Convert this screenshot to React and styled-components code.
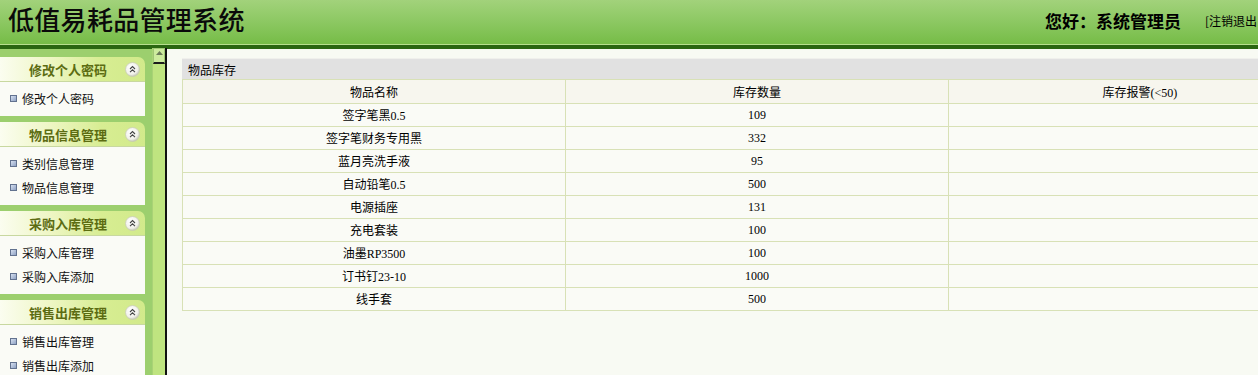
import styled, { createGlobalStyle } from 'styled-components';

const GlobalStyle = createGlobalStyle`
    html, body {
        margin: 0;
        padding: 0;
        background: #f8faf3;
        overflow: hidden;
    }
    body {
        font-family: "Liberation Serif", "Noto Sans CJK SC", serif;
        font-size: 12px;
        color: #000;
    }
`;

const menus = [
    { title: '修改个人密码', items: ['修改个人密码'] },
    { title: '物品信息管理', items: ['类别信息管理', '物品信息管理'] },
    { title: '采购入库管理', items: ['采购入库管理', '采购入库添加'] },
    { title: '销售出库管理', items: ['销售出库管理', '销售出库添加'] },
];

const stock = [
    ['签字笔黑0.5', '109'],
    ['签字笔财务专用黑', '332'],
    ['蓝月亮洗手液', '95'],
    ['自动铅笔0.5', '500'],
    ['电源插座', '131'],
    ['充电套装', '100'],
    ['油墨RP3500', '100'],
    ['订书钉23-10', '1000'],
    ['线手套', '500'],
];

const CollapseIcon = () => (
    <svg width="15" height="15" viewBox="0 0 15 15">
        <defs>
            <radialGradient id="cg" cx="40%" cy="35%" r="70%">
                <stop offset="0%" stopColor="#ffffff" />
                <stop offset="70%" stopColor="#f1f1ea" />
                <stop offset="100%" stopColor="#b9bca8" />
            </radialGradient>
        </defs>
        <circle cx="7.5" cy="7.5" r="7" fill="url(#cg)" stroke="#c9cdb4" strokeWidth="0.8" />
        <path d="M5 7 L7.5 4.6 L10 7 M5 10.2 L7.5 7.8 L10 10.2" fill="none" stroke="#444" strokeWidth="1.1" />
    </svg>
);

const App = () => {
    return (
        <>
            <GlobalStyle />
            <Page>
                <Header>
                    <Title>低值易耗品管理系统</Title>
                    <UserBox>
                        <Greeting>您好：系统管理员</Greeting>
                        <Logout>[注销退出</Logout>
                    </UserBox>
                </Header>
                <Body>
                    <Sidebar>
                        <Menu>
                            {menus.map((m) => (
                                <Section key={m.title}>
                                    <SectionHead>
                                        <SectionTitle>{m.title}</SectionTitle>
                                        <IconSlot>
                                            <CollapseIcon />
                                        </IconSlot>
                                    </SectionHead>
                                    <ItemList>
                                        {m.items.map((it) => (
                                            <Item key={it}>
                                                <Bullet />
                                                {it}
                                            </Item>
                                        ))}
                                    </ItemList>
                                </Section>
                            ))}
                        </Menu>
                        <Strip>
                            <StripButton>
                                <svg width="7" height="4" viewBox="0 0 7 4">
                                    <path d="M0 4 L3.5 0 L7 4 Z" fill="#6c7a5a" />
                                </svg>
                            </StripButton>
                        </Strip>
                    </Sidebar>
                    <Content>
                        <Panel>
                            <PanelTitle>物品库存</PanelTitle>
                            <Table>
                                <thead>
                                    <tr>
                                        <Th>物品名称</Th>
                                        <Th>库存数量</Th>
                                        <Th>库存报警(&lt;50)</Th>
                                    </tr>
                                </thead>
                                <tbody>
                                    {stock.map(([name, qty]) => (
                                        <tr key={name}>
                                            <Td>{name}</Td>
                                            <Td>{qty}</Td>
                                            <Td></Td>
                                        </tr>
                                    ))}
                                </tbody>
                            </Table>
                        </Panel>
                    </Content>
                </Body>
            </Page>
        </>
    );
};

export default App;

const Page = styled.div`
    width: 1258px;
    height: 375px;
    display: flex;
    flex-direction: column;
    overflow: hidden;
`;

const Header = styled.div`
    height: 44px;
    flex-shrink: 0;
    display: flex;
    align-items: center;
    justify-content: space-between;
    padding-left: 8px;
    background: linear-gradient(to bottom, #a2d27b 0%, #8cc862 50%, #76bc47 100%);
    border-bottom: 1px solid #b7df8e;
    box-shadow: 0 4px 0 #2a6611;
    margin-bottom: 4px;
`;

const Title = styled.h1`
    margin: 0 0 7px 0;
    font-family: "Noto Sans CJK SC", sans-serif;
    font-size: 26px;
    font-weight: 500;
    letter-spacing: 0.3px;
    color: #0a0a0a;
`;

const UserBox = styled.div`
    display: flex;
    align-items: center;
    gap: 24px;
    margin-bottom: 4px;
    margin-right: 1px;
    white-space: nowrap;
`;

const Greeting = styled.span`
    font-family: "Noto Sans CJK SC", sans-serif;
    font-size: 17px;
    font-weight: 700;
`;

const Logout = styled.span`
    font-family: "Noto Sans CJK SC", sans-serif;
    font-size: 12px;
`;

const Body = styled.div`
    flex: 1;
    display: flex;
    min-height: 0;
`;

const Sidebar = styled.div`
    flex-shrink: 0;
    display: flex;
    background: #9ccf6e;
`;

const Menu = styled.div`
    width: 145px;
    flex-shrink: 0;
    padding: 8px 7px 0 0;
    display: flex;
    flex-direction: column;
    gap: 6px;
`;

const Section = styled.div`
    display: flex;
    flex-direction: column;
`;

const SectionHead = styled.div`
    height: 25px;
    display: flex;
    align-items: center;
    border-radius: 0 7px 0 0;
    background: linear-gradient(to right, #fbfdf0 0%, #eef6c4 35%, #d7ed92 70%, #d2ea8b 100%);
    border-bottom: 1px solid #c8d8a0;
    box-sizing: border-box;
`;

const SectionTitle = styled.span`
    flex: 1;
    text-align: center;
    padding-left: 11px;
    font-family: "Noto Sans CJK SC", sans-serif;
    font-size: 13px;
    font-weight: 700;
    color: #5c6c12;
`;

const IconSlot = styled.span`
    width: 15px;
    height: 15px;
    margin-right: 5px;
    display: flex;
`;

const ItemList = styled.div`
    background: #fafbf6;
    padding: 4px 0 6px;
`;

const Item = styled.div`
    height: 24px;
    display: flex;
    align-items: center;
    padding-left: 10px;
    font-family: "Noto Sans CJK SC", sans-serif;
    font-size: 12px;
    color: #111;
`;

const Bullet = styled.span`
    width: 5px;
    height: 5px;
    margin-right: 5px;
    border: 1px solid #62728f;
    background: linear-gradient(135deg, #d6e0f0, #8fa2c4);
`;

const Strip = styled.div`
    width: 12px;
    flex-shrink: 0;
    margin-top: -1px;
    background: #bfe480;
    border-left: 1px solid #a9d276;
    border-right: 2px solid #111;
`;

const StripButton = styled.div`
    height: 16px;
    display: flex;
    justify-content: center;
    padding-top: 2px;
    box-sizing: border-box;
    background: #cdeb9e;
    border: 1px solid #9fc874;
    border-bottom: 2px solid #1d1d1d;
`;

const Content = styled.div`
    flex: 1;
    min-width: 0;
    padding: 9px 0 0 15px;
    overflow: hidden;
`;

const Panel = styled.div`
    width: 1150px;
`;

const PanelTitle = styled.div`
    height: 21px;
    line-height: 21px;
    padding-left: 6px;
    background: #e1e1e1;
    font-family: "Noto Sans CJK SC", sans-serif;
    font-size: 12px;
    border-top: 1px solid #f0f0ec;
    box-sizing: border-box;
`;

const Table = styled.table`
    width: 1150px;
    border-collapse: collapse;
    table-layout: fixed;
    font-size: 12px;
`;

const Th = styled.th`
    height: 23px;
    padding: 0;
    font-weight: 400;
    background: #f7f6ee;
    border: 1px solid #d8e1b6;
`;

const Td = styled.td`
    height: 22px;
    padding: 0;
    text-align: center;
    background: #fafbf6;
    border: 1px solid #d8e1b6;
`;
